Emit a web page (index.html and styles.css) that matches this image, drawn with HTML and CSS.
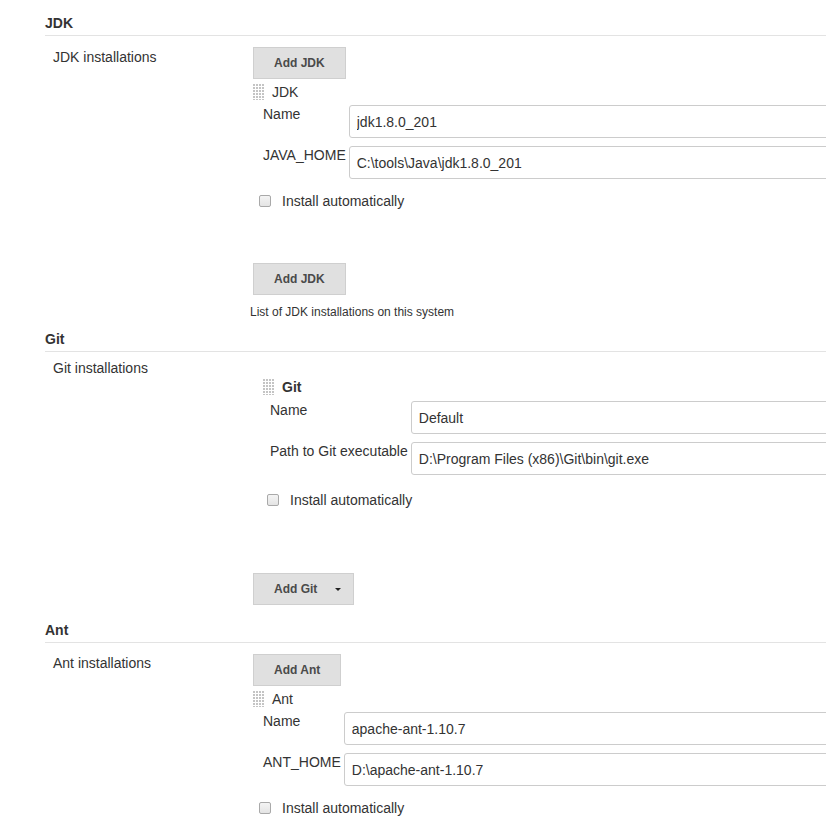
FILE: index.html
```html
<!DOCTYPE html>
<html lang="en">
<head>
<meta charset="utf-8">
<title>Global Tool Configuration</title>
<link rel="stylesheet" href="styles.css">
</head>
<body>
<div class="page">

  <section class="section">
    <div class="section-header">JDK</div>
    <div class="setting setting--jdk">
      <div class="setting-name">JDK installations</div>
      <div class="setting-main">
        <button class="btn" type="button">Add JDK</button>
        <div class="chunk">
          <div class="chunk-header"><span class="handle"></span><span class="chunk-title">JDK</span></div>
          <div class="fields">
            <div class="field-label">Name</div>
            <input class="field-input" type="text" value="jdk1.8.0_201">
            <div class="field-label">JAVA_HOME</div>
            <input class="field-input" type="text" value="C:\tools\Java\jdk1.8.0_201">
          </div>
          <label class="check"><input class="check-box" type="checkbox"><span>Install automatically</span></label>
        </div>
        <button class="btn btn--after-chunk" type="button">Add JDK</button>
        <div class="description">List of JDK installations on this system</div>
      </div>
    </div>
  </section>

  <section class="section section--git">
    <div class="section-header">Git</div>
    <div class="setting setting--git">
      <div class="setting-name">Git installations</div>
      <div class="setting-main">
        <div class="chunk chunk--git">
          <div class="chunk-header"><span class="handle"></span><span class="chunk-title chunk-title--bold">Git</span></div>
          <div class="fields">
            <div class="field-label">Name</div>
            <input class="field-input" type="text" value="Default">
            <div class="field-label">Path to Git executable</div>
            <input class="field-input" type="text" value="D:\Program Files (x86)\Git\bin\git.exe">
          </div>
          <label class="check"><input class="check-box" type="checkbox"><span>Install automatically</span></label>
        </div>
        <button class="btn btn--menu" type="button">Add Git<span class="caret"></span></button>
      </div>
    </div>
  </section>

  <section class="section section--ant">
    <div class="section-header">Ant</div>
    <div class="setting setting--ant">
      <div class="setting-name">Ant installations</div>
      <div class="setting-main">
        <button class="btn" type="button">Add Ant</button>
        <div class="chunk">
          <div class="chunk-header"><span class="handle"></span><span class="chunk-title">Ant</span></div>
          <div class="fields">
            <div class="field-label">Name</div>
            <input class="field-input" type="text" value="apache-ant-1.10.7">
            <div class="field-label">ANT_HOME</div>
            <input class="field-input" type="text" value="D:\apache-ant-1.10.7">
          </div>
          <label class="check"><input class="check-box" type="checkbox"><span>Install automatically</span></label>
        </div>
      </div>
    </div>
  </section>

</div>
</body>
</html>
```

FILE: styles.css
```css
html, body {
  margin: 0;
  padding: 0;
  background: #fff;
  overflow: hidden;
}

body {
  font-family: "Liberation Sans", Arial, Helvetica, sans-serif;
  font-size: 14px;
  color: #333;
}

.page {
  width: 860px;
  padding: 15px 0 0 45px;
  box-sizing: border-box;
}

.section-header {
  font-weight: bold;
  font-size: 14px;
  line-height: 16px;
  padding-bottom: 4px;
  border-bottom: 1px solid #e3e3e3;
}

.section--git .section-header {
  margin-top: 12px;
}

.section--ant .section-header {
  margin-top: 17px;
}

.setting {
  display: grid;
  grid-template-columns: 200px 1fr;
  padding-left: 8px;
}

.setting-name {
  line-height: 16px;
  padding-top: 13px;
}

.setting-main {
  padding-top: 11px;
  display: flex;
  flex-direction: column;
  align-items: flex-start;
}

.setting--git .setting-name {
  padding-top: 8px;
}

.setting--git .setting-main {
  padding-top: 27px;
}

.setting--ant .setting-name {
  padding-top: 12px;
}

.btn {
  display: inline-flex;
  align-items: center;
  height: 32px;
  padding: 0 20px;
  margin: 0;
  border: 1px solid #cfcfcf;
  background: #e0e0e0;
  color: #4a4a4a;
  font-family: "Liberation Sans", Arial, Helvetica, sans-serif;
  font-size: 12px;
  font-weight: bold;
  border-radius: 0;
  box-sizing: border-box;
}

.btn--after-chunk {
  margin-top: 54px;
}

.btn--menu {
  margin-top: 65px;
  padding: 0 12px 0 20px;
}

.caret {
  width: 0;
  height: 0;
  margin-left: 18px;
  border-left: 3px solid transparent;
  border-right: 3px solid transparent;
  border-top: 3px solid #222;
}

.chunk {
  align-self: stretch;
  margin-top: 5px;
}

.chunk--git {
  margin-top: 0;
  margin-left: 10px;
}

.chunk-header {
  display: flex;
  align-items: flex-start;
  height: 16px;
  line-height: 16px;
}

.handle {
  width: 11px;
  height: 16px;
  background-color: #c4c4c4;
  background-image:
    linear-gradient(90deg, #fff 1px, transparent 1px),
    linear-gradient(#fff 1px, transparent 1px);
  background-size: 3px 3px;
  background-position: -1px -1px;
}

.chunk-title {
  margin-left: 8px;
}

.chunk-title--bold {
  font-weight: bold;
}

.fields {
  display: grid;
  grid-template-columns: max-content 1fr;
  column-gap: 3px;
  row-gap: 8px;
  margin-top: 5px;
  padding-left: 10px;
}

.chunk--git .fields {
  margin-top: 6px;
  padding-left: 7px;
}

.field-label {
  line-height: 16px;
  padding-top: 1px;
}

.field-input {
  height: 33px;
  box-sizing: border-box;
  border: 1px solid #ccc;
  border-radius: 3px;
  padding: 0 7px;
  font-family: "Liberation Sans", Arial, Helvetica, sans-serif;
  font-size: 14px;
  color: #333;
  background: #fff;
  min-width: 0;
  width: 100%;
}

.check {
  display: flex;
  align-items: center;
  height: 16px;
  line-height: 16px;
  margin-top: 14px;
  padding-left: 6px;
}

.chunk--git .check {
  margin-top: 17px;
  padding-left: 4px;
}

.check-box {
  appearance: none;
  -webkit-appearance: none;
  width: 12px;
  height: 12px;
  margin: 0 11px 0 0;
  border: 1px solid #a9a9a9;
  border-radius: 2px;
  background: linear-gradient(#f4f4f4, #e4e4e4);
  box-sizing: border-box;
}

.description {
  margin-top: 10px;
  margin-left: -3px;
  font-size: 12px;
  line-height: 14px;
}
```
